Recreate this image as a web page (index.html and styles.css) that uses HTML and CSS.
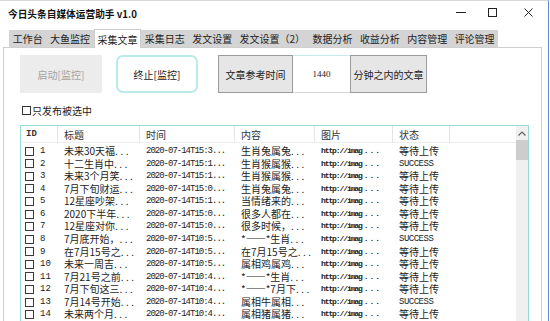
FILE: index.html
```html
<!DOCTYPE html>
<html lang="zh-CN">
<head>
<meta charset="utf-8">
<title>今日头条自媒体运营助手 v1.0</title>
<link rel="stylesheet" href="styles.css">
</head>
<body>
<div class="window">
  <div class="titlebar">
    <span class="title">今日头条自媒体运营助手 v1.0</span>
    <div class="controls">
      <span class="ctl ctl-min"><svg width="10" height="10" viewBox="0 0 10 10"><path d="M0 5.5H10" stroke="#222" stroke-width="1"/></svg></span>
      <span class="ctl ctl-max"><svg width="9" height="9" viewBox="0 0 9 9"><rect x="0.5" y="0.5" width="8" height="8" fill="none" stroke="#222" stroke-width="1"/></svg></span>
      <span class="ctl ctl-close"><svg width="9" height="9" viewBox="0 0 9 9"><path d="M0.5 0.5L8.5 8.5M8.5 0.5L0.5 8.5" stroke="#222" stroke-width="1"/></svg></span>
    </div>
  </div>
  <div class="tabctl">
    <div class="tabs">
      <span class="tab">工作台</span>
      <span class="tab">大鱼监控</span>
      <span class="tab active">采集文章</span>
      <span class="tab">采集日志</span>
      <span class="tab">发文设置</span>
      <span class="tab">发文设置（2）</span>
      <span class="tab">数据分析</span>
      <span class="tab">收益分析</span>
      <span class="tab">内容管理</span>
      <span class="tab">评论管理</span>
    </div>
    <div class="panel">
      <div class="toolbar">
        <div class="btn btn-start">启动[监控]</div>
        <div class="btn btn-stop">终止[监控]</div>
        <div class="timegroup">
          <div class="btn btn-flat w75">文章参考时间</div>
          <div class="input">1440</div>
          <div class="btn btn-flat w77">分钟之内的文章</div>
        </div>
      </div>
      <div class="check"><span class="box"></span><span>只发布被选中</span></div>
      <div class="grid">
        <div class="main">
          <div class="head">
            <div class="hid">ID</div>
            <div>标题</div>
            <div>时间</div>
            <div>内容</div>
            <div>图片</div>
            <div>状态</div>
            <div class="last"></div>
          </div>
          <div class="rows">
            <div class="row"><div class="idc"><span class="cb"></span><span class="num">1</span></div><div>未来30天福<span class="el">...</span></div><div class="mono">2020-07-14T15:3...</div><div>生肖兔属兔<span class="el">...</span></div><div class="url">http://imag<span class="ud">...</span></div><div>等待上传</div><div></div></div>
            <div class="row"><div class="idc"><span class="cb"></span><span class="num">2</span></div><div>十二生肖中<span class="el">...</span></div><div class="mono">2020-07-14T15:1...</div><div>生肖猴属猴<span class="el">...</span></div><div class="url">http://imag<span class="ud">...</span></div><div class="ok">SUCCESS</div><div></div></div>
            <div class="row"><div class="idc"><span class="cb"></span><span class="num">3</span></div><div>未来3个月笑<span class="el">...</span></div><div class="mono">2020-07-14T15:1...</div><div>生肖猴属猴<span class="el">...</span></div><div class="url">http://imag<span class="ud">...</span></div><div>等待上传</div><div></div></div>
            <div class="row"><div class="idc"><span class="cb"></span><span class="num">4</span></div><div>7月下旬财运<span class="el">...</span></div><div class="mono">2020-07-14T15:0...</div><div>生肖兔属兔<span class="el">...</span></div><div class="url">http://imag<span class="ud">...</span></div><div>等待上传</div><div></div></div>
            <div class="row"><div class="idc"><span class="cb"></span><span class="num">5</span></div><div>12星座吵架<span class="el">...</span></div><div class="mono">2020-07-14T15:1...</div><div>当情绪来的<span class="el">...</span></div><div class="url">http://imag<span class="ud">...</span></div><div>等待上传</div><div></div></div>
            <div class="row"><div class="idc"><span class="cb"></span><span class="num">6</span></div><div>2020下半年<span class="el">...</span></div><div class="mono">2020-07-14T15:0...</div><div>很多人都在<span class="el">...</span></div><div class="url">http://imag<span class="ud">...</span></div><div>等待上传</div><div></div></div>
            <div class="row"><div class="idc"><span class="cb"></span><span class="num">7</span></div><div>12星座对你<span class="el">...</span></div><div class="mono">2020-07-14T15:0...</div><div>很多时候，<span class="el">...</span></div><div class="url">http://imag<span class="ud">...</span></div><div>等待上传</div><div></div></div>
            <div class="row"><div class="idc"><span class="cb"></span><span class="num">8</span></div><div>7月底开始，<span class="el">...</span></div><div class="mono">2020-07-14T10:5...</div><div>*——*生肖<span class="el">...</span></div><div class="url">http://imag<span class="ud">...</span></div><div class="ok">SUCCESS</div><div></div></div>
            <div class="row"><div class="idc"><span class="cb"></span><span class="num">9</span></div><div>在7月15号之<span class="el">...</span></div><div class="mono">2020-07-14T10:5...</div><div>在7月15号之<span class="el">...</span></div><div class="url">http://imag<span class="ud">...</span></div><div>等待上传</div><div></div></div>
            <div class="row"><div class="idc"><span class="cb"></span><span class="num">10</span></div><div>未来一周吉<span class="el">...</span></div><div class="mono">2020-07-14T10:5...</div><div>属相鸡属鸡<span class="el">...</span></div><div class="url">http://imag<span class="ud">...</span></div><div>等待上传</div><div></div></div>
            <div class="row"><div class="idc"><span class="cb"></span><span class="num">11</span></div><div>7月21号之前<span class="el">...</span></div><div class="mono">2020-07-14T10:4...</div><div>*——*生肖<span class="el">...</span></div><div class="url">http://imag<span class="ud">...</span></div><div>等待上传</div><div></div></div>
            <div class="row"><div class="idc"><span class="cb"></span><span class="num">12</span></div><div>7月下旬这三<span class="el">...</span></div><div class="mono">2020-07-14T10:4...</div><div>*——*7月下<span class="el">...</span></div><div class="url">http://imag<span class="ud">...</span></div><div>等待上传</div><div></div></div>
            <div class="row"><div class="idc"><span class="cb"></span><span class="num">13</span></div><div>7月14号开始<span class="el">...</span></div><div class="mono">2020-07-14T10:4...</div><div>属相牛属相<span class="el">...</span></div><div class="url">http://imag<span class="ud">...</span></div><div class="ok">SUCCESS</div><div></div></div>
            <div class="row"><div class="idc"><span class="cb"></span><span class="num">14</span></div><div>未来两个月<span class="el">...</span></div><div class="mono">2020-07-14T10:4...</div><div>属相猪属猪<span class="el">...</span></div><div class="url">http://imag<span class="ud">...</span></div><div>等待上传</div><div></div></div>
          </div>
        </div>
        <div class="scroll">
          <svg class="arrow" width="8" height="5" viewBox="0 0 8 5"><path d="M0.5 4.5L4 1L7.5 4.5" fill="none" stroke="#606060" stroke-width="1.2"/></svg>
          <div class="thumb"></div>
        </div>
      </div>
    </div>
  </div>
</div>
</body>
</html>
```
FILE: styles.css
```css
* { box-sizing: border-box; margin: 0; padding: 0; }
html, body { width: 550px; height: 321px; overflow: hidden; background: #fff; }
body {
  font-family: "Noto Sans CJK SC", "Noto Sans", sans-serif;
  font-size: 10px;
  color: #1c1c1c;
}
.window {
  width: 549px;
  height: 321px;
  border-top: 1px solid #d6d6d6;
  border-right: 1px solid #5d8fca;
  overflow: hidden;
}
.titlebar {
  height: 25px;
  display: flex;
  align-items: center;
  justify-content: space-between;
}
.title {
  font-weight: bold;
  font-size: 9.7px;
  padding-left: 8px;
  color: #111;
}
.controls { display: flex; height: 100%; }
.ctl { display: flex; align-items: center; justify-content: center; height: 100%; padding-bottom: 3px; }
.ctl-min { width: 32px; }
.ctl-max { width: 31px; }
.ctl-close { width: 40px; }

.tabctl { margin: 3px 0 0 3px; width: 539px; }
.tabs {
  display: flex;
  align-items: flex-end;
  height: 18px;
  padding-left: 6px;
}
.tab {
  height: 17px;
  line-height: 17px;
  padding: 0 3.7px;
  background: #d4d4d4;
  color: #222;
  white-space: nowrap;
}
.tab.active {
  height: 19px;
  line-height: 19px;
  padding: 0 2.7px;
  background: #fff;
  border: 1px solid #cccccc;
  border-bottom: 0;
  margin-bottom: -1px;
  position: relative;
  z-index: 1;
}
.panel {
  border: 1px solid #cfcfcf;
  height: 280px;
  padding: 7px 0 0 16px;
}
.toolbar { display: flex; height: 38px; }
.btn {
  display: flex;
  align-items: center;
  justify-content: center;
  white-space: nowrap;
}
.btn-start { width: 82px; background: #ececec; color: #a3a3a3; }
.btn-stop {
  width: 82px;
  margin-left: 14px;
  background: #fff;
  border: 2px solid #b9ece8;
  border-radius: 7px;
  color: #222;
}
.timegroup { display: flex; margin-left: 20px; }
.btn-flat { background: #e6e6e6; border: 1px solid #9c9c9c; color: #222; }
.w75 { width: 75px; }
.w77 { width: 77px; }
.input {
  width: 57px;
  display: flex;
  align-items: center;
  justify-content: center;
  background: #fff;
  border-top: 1px solid #c6ece9;
  border-bottom: 1px solid #d8d8d8;
  font-family: "Liberation Serif", serif;
  font-size: 9px;
  color: #222;
}
.check {
  display: flex;
  align-items: center;
  gap: 1px;
  height: 11px;
  margin: 12px 0 0 2px;
}
.box { width: 9px; height: 9px; border: 1px solid #333; background: #fff; }

.grid {
  margin-top: 9px;
  width: 509px;
  height: 220px;
  border: 1px solid #99dad5;
  display: flex;
}
.main { width: 495px; }
.head, .row {
  display: grid;
  grid-template-columns: 37px 82px 95px 80px 78px 57px 1fr;
}
.head {
  height: 17px;
  border-bottom: 1px solid #ededed;
  color: #333;
}
.head > div {
  line-height: 17px;
  padding-left: 6px;
  border-right: 1px solid #e3e3e3;
}
.head > div.last { border-right: 0; }
.head > .hid {
  padding-left: 5px;
  font-family: "Liberation Mono", monospace;
  font-size: 9px;
  font-weight: bold;
}
.rows { padding-top: 2px; }
.row { height: 12.57px; }
.row > div {
  line-height: 12.57px;
  padding-left: 6px;
  white-space: nowrap;
}
.row > .idc {
  display: flex;
  align-items: center;
  padding-left: 4px;
}
.cb { width: 9px; height: 9px; border: 1px solid #3a3a3a; background: #fff; flex: none; }
.num {
  margin-left: 6px;
  font-family: "Liberation Mono", monospace;
  font-size: 9px;
}
.el { letter-spacing: 2.5px; }
.row > .mono {
  font-family: "Liberation Mono", monospace;
  font-size: 9px;
  letter-spacing: -1px;
}
.row > .url {
  font-family: "Liberation Mono", monospace;
  font-weight: bold;
  font-size: 8px;
  letter-spacing: -1.1px;
  color: #222;
}
.ud { letter-spacing: 1px; margin-left: 2px; }
.row > .ok {
  font-family: "Liberation Mono", monospace;
  font-size: 9px;
  letter-spacing: -0.5px;
}
.scroll {
  width: 12px;
  background: #f0f0f0;
  display: flex;
  flex-direction: column;
  align-items: center;
}
.arrow { margin-top: 5px; }
.thumb {
  margin-top: 4px;
  width: 12px;
  height: 20px;
  background: #cdcdcd;
}
```
